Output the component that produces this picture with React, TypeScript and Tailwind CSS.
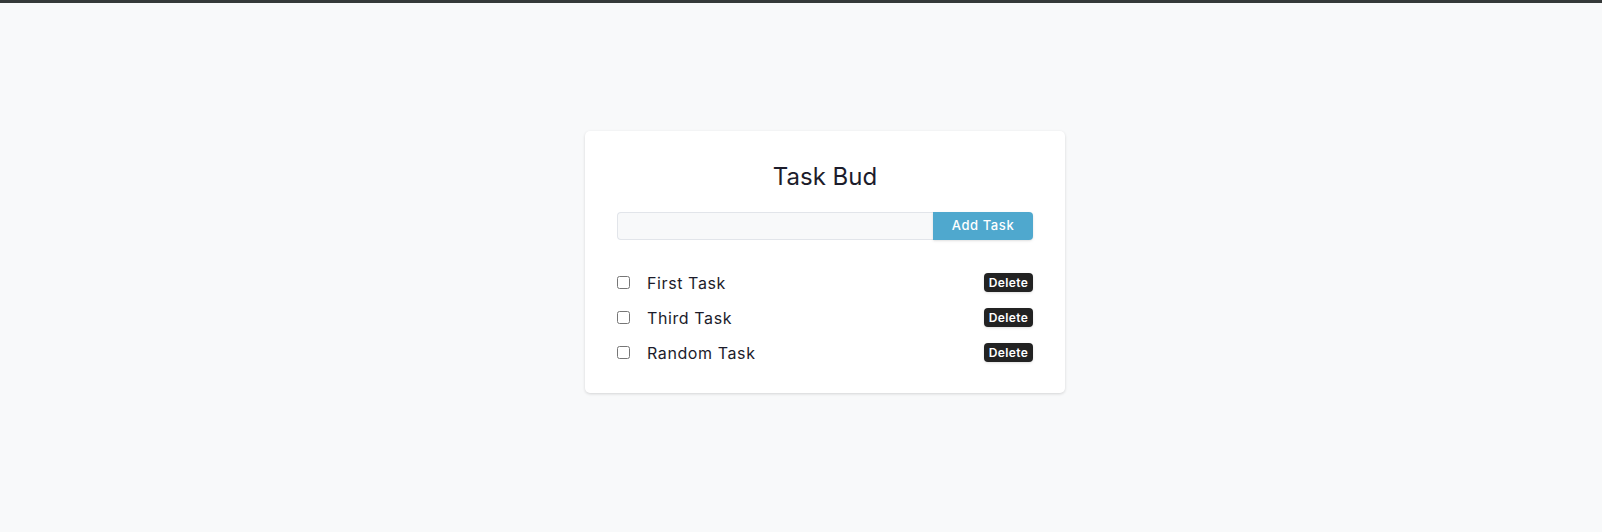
const tasks = ["First Task", "Third Task", "Random Task"]

function TaskRow({ label }: { label: string }) {
  return (
    <li className="flex h-[35px] items-center justify-between">
      <label className="flex items-center">
        <input type="checkbox" className="h-[13px] w-[13px] m-0 accent-gray-600" />
        <span className="ml-[17px] text-[16px] tracking-[0.6px] text-[#1c1c2b]">{label}</span>
      </label>
      <button className="h-[19px] w-[49px] rounded-[4px] bg-[#222222] text-[12px] font-semibold leading-none tracking-[0.4px] text-white shadow-sm">
        Delete
      </button>
    </li>
  )
}

export default function App() {
  return (
    <div className="min-h-[532px] border-t-[3px] border-[#353939] bg-[#f8f9fa] font-['Inter',sans-serif]">
      <div className="flex justify-center pt-[128px] pl-12">
        <div className="w-[480px] rounded-[5px] bg-white px-8 pt-[30px] pb-[23px] shadow-[0_1px_3px_rgba(0,0,0,0.15)]">
          <h1 className="text-center text-[24px] leading-[32px] text-[#1c1c2b]">Task Bud</h1>
          <div className="mt-[19px] flex h-[28px]">
            <input
              type="text"
              className="h-full flex-1 rounded-l-[4px] border border-r-0 border-[#e2e5ea] bg-[#f8f9fa] px-2 text-sm outline-none"
            />
            <button className="h-full w-[100px] rounded-r-[4px] bg-[#4fa8ce] text-[13px] font-medium tracking-[0.6px] text-white shadow-sm">
              Add Task
            </button>
          </div>
          <ul className="mt-[25px]">
            {tasks.map((t) => (
              <TaskRow key={t} label={t} />
            ))}
          </ul>
        </div>
      </div>
    </div>
  )
}
